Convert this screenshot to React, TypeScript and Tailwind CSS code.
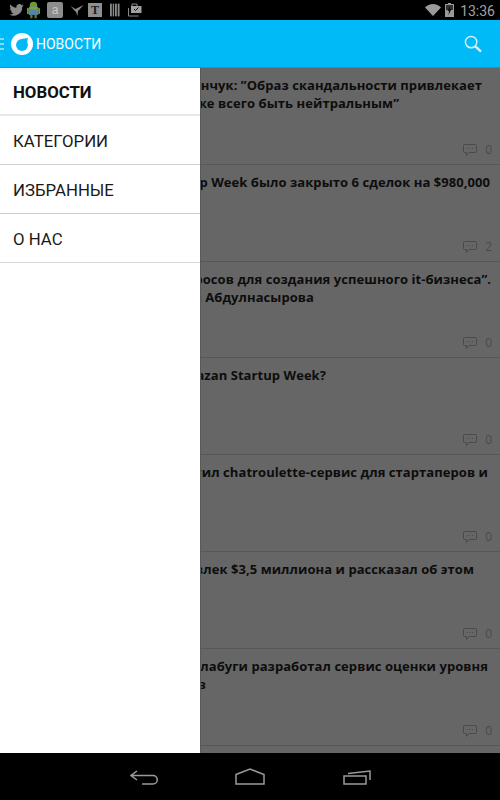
import React from "react";

const rows: { lines: [string, string][]; count: string }[] = [
  { lines: [["Панчук: ”Образ скандальности привлекает", "pr-[18px]"], ["также всего быть нейтральным”", "pr-[101px]"]], count: "0" },
  { lines: [["Startup Week было закрыто 6 сделок на $980,000", "pr-[10px]"]], count: "2" },
  { lines: [["вопросов для создания успешного it-бизнеса”.", "pr-[9px]"], ["Ильяса Абдулнасырова", "pr-[186px]"]], count: "0" },
  { lines: [["Kazan Startup Week?", "pr-[174px]"]], count: "0" },
  { lines: [["запустил chatroulette-сервис для стартаперов и", "pr-[12px]"]], count: "0" },
  { lines: [["привлек $3,5 миллиона и рассказал об этом", "pr-[26px]"]], count: "0" },
  { lines: [["из Елабуги разработал сервис оценки уровня", "pr-[12px]"], ["стартапов", "pr-[294px]"]], count: "0" },
];

function Bubble() {
  return (
    <svg width="14" height="14" viewBox="0 0 14 14" fill="none" stroke="#4a4a4a" strokeWidth="1">
      <path d="M1.5 1.5h11a1 1 0 0 1 1 1v6a1 1 0 0 1-1 1H6l-2.5 3v-3h-2a1 1 0 0 1-1-1v-6a1 1 0 0 1 1-1z" />
      <path d="M4 5.5h1M6.5 5.5h1M9 5.5h1" />
    </svg>
  );
}

function StatusIcons() {
  return (
    <div className="flex items-center h-full">
      <svg className="ml-[9px]" width="15" height="12" viewBox="0 0 24 20" fill="#8a8a8a">
        <path d="M24 2.4c-.9.4-1.8.7-2.8.8 1-.6 1.8-1.6 2.2-2.7-1 .6-2 1-3.1 1.2A4.9 4.9 0 0 0 11.9 6.2C7.800 6 4.200 4 1.700.9c-1.300 2.200-.7 5.100 1.500 6.600-.8 0-1.600-.2-2.200-.6 0 2.300 1.600 4.400 3.900 4.900-.7.200-1.500.2-2.200.1.6 2 2.500 3.400 4.600 3.400A9.900 9.900 0 0 1 0 17.300 14 14 0 0 0 21.500 4.900c1-.7 1.800-1.500 2.500-2.500z" />
      </svg>
      <svg className="ml-[3px]" width="13" height="18" viewBox="0 0 14 19">
        <circle cx="7" cy="4.500" r="4" fill="#6f9a3a" />
        <rect x="2" y="6" width="10" height="9" rx="1" fill="#4f82b5" />
        <path d="M3 6h8v3H3z" fill="#7fa043" />
        <rect x="0" y="7" width="2" height="7" rx="1" fill="#6f9a3a" />
        <rect x="12" y="7" width="2" height="7" rx="1" fill="#6f9a3a" />
        <rect x="3.500" y="14" width="2.500" height="4.500" rx="1" fill="#5c7f30" />
        <rect x="8" y="14" width="2.500" height="4.500" rx="1" fill="#5c7f30" />
      </svg>
      <div className="ml-[7px] w-[16px] h-[16px] rounded-[2px] bg-[#8c8c8c] text-[#c8c8c8] flex items-center justify-center text-[12px] leading-none font-['Liberation_Sans',sans-serif]">
        а
      </div>
      <svg className="ml-[7px]" width="14" height="11" viewBox="0 0 13 11" fill="#8a8a8a">
        <path d="M0 1l5 3 3-1.500L13 0 9 4.500 7.500 6 7 11 5.500 7 3.500 5z" />
      </svg>
      <div className="ml-[4px] w-[14px] h-[14px] bg-[#8f8f8f] text-[#1c1c1c] flex items-center justify-center text-[12px] leading-none font-bold font-['Liberation_Serif',serif]">
        T
      </div>
      <svg className="ml-[8px]" width="10" height="14" viewBox="0 0 11 14" fill="#8a8a8a">
        <rect x="0" width="2" height="14" />
        <rect x="3" width="1.500" height="14" />
        <rect x="5.500" width="2" height="14" />
        <rect x="8.500" width="2" height="14" />
      </svg>
      <svg className="ml-[8px]" width="14" height="14" viewBox="0 0 14 14">
        <path d="M4 3V1h5v2" fill="none" stroke="#8a8a8a" />
        <rect x="3" y="3" width="10.500" height="7" fill="#a0a0a0" />
        <path d="M6 6l1.500 1.500L10.500 4.500" fill="none" stroke="#111" />
        <path d="M.5 5v8h10" fill="none" stroke="#8a8a8a" />
      </svg>
    </div>
  );
}

export default function App() {
  return (
    <div className="relative w-[500px] h-[800px] overflow-hidden flex flex-col bg-black font-['Roboto',sans-serif]">
      <div className="h-[20px] shrink-0 bg-black flex items-center justify-between">
        <StatusIcons />
        <div className="flex items-center pr-[5px]">
          <svg width="16" height="12" viewBox="0 0 16 12" fill="#9a9a9a">
            <path d="M8 12L0 3.500C2 1.300 5 0 8 0s6 1.300 8 3.500z" />
          </svg>
          <svg className="ml-[4px]" width="9" height="14" viewBox="0 0 9 14">
            <path d="M3 0h3v1h3v13H0V1h3z" fill="#9a9a9a" />
            <path d="M1 2h7v5H1z" fill="#333" />
            <path d="M5 3L2.500 8H4L3.500 12 6.500 6H5z" fill="#111" />
          </svg>
          <span className="ml-[6px] pt-[1px] text-[14px] leading-none text-[#a0a0a0]">13:36</span>
        </div>
      </div>
      <header className="h-[48px] shrink-0 bg-[#00baf7] border-b border-[#5f7f8a] flex items-center justify-between relative z-10">
        <div className="flex items-center">
          <div className="w-[4px] flex flex-col gap-[3px]">
            <div className="h-[2px] bg-[#7fdcfb]" />
            <div className="h-[2px] bg-[#7fdcfb]" />
            <div className="h-[2px] bg-[#7fdcfb]" />
          </div>
          <svg className="ml-[7px]" width="22" height="22" viewBox="0 0 24 24">
            <circle cx="12" cy="12" r="12" fill="#fff" />
            <circle cx="12" cy="13" r="6.500" fill="#00baf7" />
            <path d="M11 6.500l7.500-1-1 5.500z" fill="#00baf7" />
          </svg>
          <span className="ml-[3px] text-[14px] leading-none text-white">НОВОСТИ</span>
        </div>
        <svg className="mr-[18px]" width="18" height="18" viewBox="0 0 19 19" fill="none" stroke="#d6f3fd">
          <circle cx="7.500" cy="7.500" r="6" strokeWidth="1.500" />
          <path d="M12 12l6 5.500" strokeWidth="2.500" />
        </svg>
      </header>
      <main className="flex-1 min-h-0 overflow-hidden bg-[#666666] font-['Open_Sans',sans-serif]">
        {rows.map((row, i) => (
          <article key={i} className="h-[96.8px] border-b border-[#575757] relative flex flex-col pt-[8px]">
            {row.lines.map(([text, cls], j) => (
              <div key={j} className={`flex justify-end whitespace-nowrap text-[13px] tracking-[0.06px] leading-[18px] font-bold text-[#0d0d0d] ${cls}`}>
                {text}
              </div>
            ))}
            <div className="absolute right-[8px] bottom-[7px] flex items-center gap-[8px] text-[12px] leading-none text-[#4a4a4a]">
              <Bubble />
              <span>{row.count}</span>
            </div>
          </article>
        ))}
      </main>
      <nav className="h-[47px] shrink-0 bg-black flex items-center justify-center relative z-10">
        <svg className="absolute left-[130px] top-[17px]" width="28" height="16" viewBox="0 0 28 16" fill="none" stroke="#9a9a9a" strokeWidth="1.500">
          <path d="M7 1L1 5.500 7 10M2 5.500h21a3.500 3.500 0 0 1 0 8.500H12" />
        </svg>
        <svg className="absolute left-[235px] top-[15px]" width="30" height="17" viewBox="0 0 30 17" fill="none" stroke="#9a9a9a" strokeWidth="1.500">
          <path d="M1 6.500L15 1l14 5.500V16H1z" />
        </svg>
        <svg className="absolute left-[343px] top-[17px]" width="28" height="16" viewBox="0 0 28 16" fill="none" stroke="#9a9a9a" strokeWidth="1.500">
          <rect x="1" y="6" width="22" height="8" />
          <path d="M5 3.500L27 1v9" />
        </svg>
      </nav>
      <aside className="absolute left-0 top-[68px] w-[200px] h-[685px] bg-white z-0 text-[16.8px] text-[#1a1a1a] shadow-[1px_0_0_#5a5a5a]">
        <div className="h-[48px] border-b-2 border-[#e8e8e8] bg-gradient-to-b from-[#f2f2f2] via-white via-10% to-white flex items-center pl-[13px] pt-[3px] font-bold text-[#111]">НОВОСТИ</div>
        <div className="h-[49px] border-b border-[#cfcfcf] flex items-center pl-[13px] pt-[3px]">КАТЕГОРИИ</div>
        <div className="h-[49px] border-b border-[#cfcfcf] flex items-center pl-[13px] pt-[3px]">ИЗБРАННЫЕ</div>
        <div className="h-[49px] border-b border-[#d8d8d8] flex items-center pl-[13px] pt-[3px]">О НАС</div>
      </aside>
    </div>
  );
}
